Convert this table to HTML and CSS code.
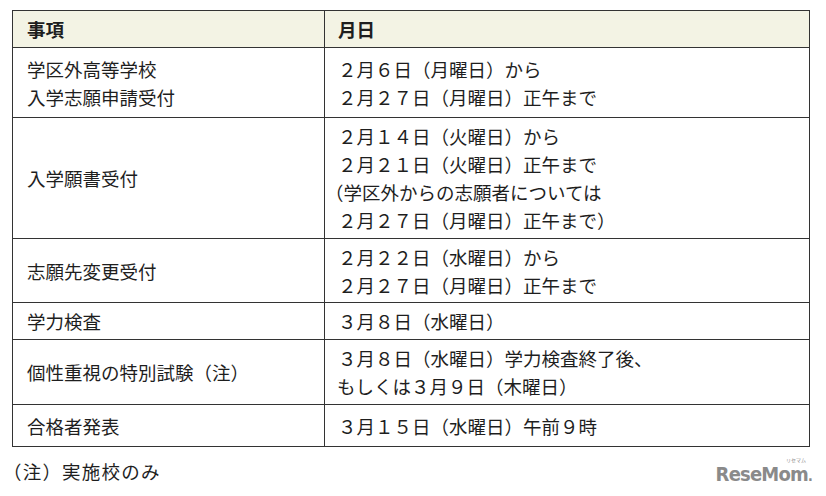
FILE: index.html
```html
<!DOCTYPE html>
<html lang="ja">
<head>
<meta charset="utf-8">
<link rel="stylesheet" href="styles.css">
</head>
<body>
<div class="page">
  <table class="sched">
    <thead>
      <tr class="r-head"><th class="c1">事項</th><th class="c2">月日</th></tr>
    </thead>
    <tbody>
      <tr class="r1"><td class="c1">学区外高等学校<br>入学志願申請受付</td><td class="c2">２月６日（月曜日）から<br>２月２７日（月曜日）正午まで</td></tr>
      <tr class="r2"><td class="c1">入学願書受付</td><td class="c2">２月１４日（火曜日）から<br>２月２１日（火曜日）正午まで<br><span class="paren">（学区外からの志願者については</span><br>２月２７日（月曜日）正午まで）</td></tr>
      <tr class="r3"><td class="c1">志願先変更受付</td><td class="c2">２月２２日（水曜日）から<br>２月２７日（月曜日）正午まで</td></tr>
      <tr class="r4"><td class="c1">学力検査</td><td class="c2">３月８日（水曜日）</td></tr>
      <tr class="r5"><td class="c1">個性重視の特別試験（注）</td><td class="c2">３月８日（水曜日）学力検査終了後、<br><span class="tight">もしくは３月９日（木曜日）</span></td></tr>
      <tr class="r6"><td class="c1">合格者発表</td><td class="c2">３月１５日（水曜日）午前９時</td></tr>
    </tbody>
  </table>
  <div class="foot">
    <p class="note">（注）実施校のみ</p>
    <div class="logo"><span class="kana">リセマム</span>ReseMom<span class="dot">.</span></div>
  </div>
</div>
</body>
</html>
```
FILE: styles.css
```css
html, body {
  margin: 0;
  padding: 0;
  background: #ffffff;
}
body {
  font-family: "Noto Sans CJK JP", "Noto Sans", sans-serif;
  color: #1e1e1e;
  font-size: 18.5px;
}
.page {
  width: 826px;
  height: 496px;
  padding: 10px 0 0 12px;
  box-sizing: border-box;
}
.sched {
  border-collapse: collapse;
  width: 798px;
  table-layout: fixed;
}
.sched th, .sched td {
  border: 1px solid #333333;
  padding: 0;
  line-height: 28px;
  vertical-align: middle;
  text-align: left;
  font-weight: normal;
}
.sched th {
  background: #f3f3e4;
  font-weight: bold;
}
.sched .c1 { width: 297px; padding-left: 14px; }
.sched .c2 { padding-left: 13px; }
.tight { margin-left: -1px; }
.paren { margin-left: -13px; }
.r-head { height: 37px; }
.r1 { height: 70px; }
.r2 { height: 121px; }
.r3 { height: 64px; }
.r4 { height: 37px; }
.r5 { height: 65px; }
.r6 { height: 42px; }
.foot {
  display: flex;
  justify-content: space-between;
  align-items: flex-start;
  width: 800px;
}
.note {
  margin: 10px 0 0 -9px;
  line-height: 28px;
  letter-spacing: 1.2px;
}
.logo {
  position: relative;
  margin-top: 14px;
  font-family: "DejaVu Sans Condensed", "DejaVu Sans", sans-serif;
  font-weight: bold;
  font-size: 20px;
  letter-spacing: -0.8px;
  color: #8a8a8a;
  line-height: 26px;
}
.logo .dot { font-size: 14px; }
.logo .kana {
  position: absolute;
  right: 6px;
  top: -4px;
  font-family: "Noto Sans CJK JP", sans-serif;
  font-size: 5px;
  letter-spacing: 0;
  line-height: 6px;
  font-weight: normal;
}
```
